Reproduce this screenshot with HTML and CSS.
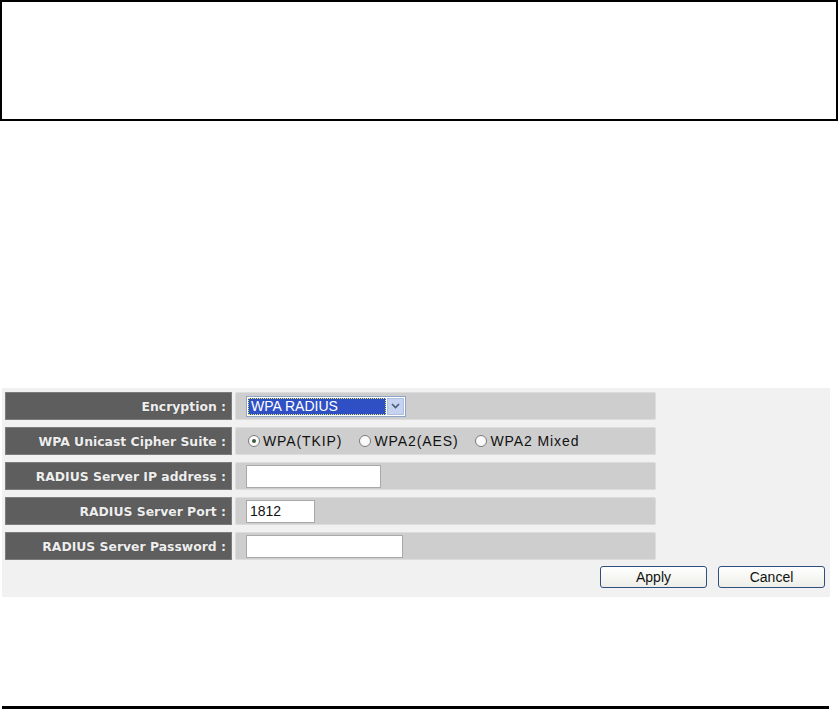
FILE: index.html
```html
<!DOCTYPE html>
<html>
<head>
<meta charset="utf-8">
<link rel="stylesheet" href="styles.css">
</head>
<body>
<div class="topbox"></div>
<div class="panel">
  <div class="grid">
    <div class="label">Encryption :</div>
    <div class="value">
      <div class="select">
        <span class="sel-text">WPA RADIUS</span>
        <span class="sel-btn"><svg width="9" height="6" viewBox="0 0 9 6"><path d="M1 1 L4.5 4.5 L8 1" fill="none" stroke="#4a5a7a" stroke-width="1.6"/></svg></span>
      </div>
    </div>
    <div class="label">WPA Unicast Cipher Suite :</div>
    <div class="value radios">
      <span class="radio-item"><span class="radio on"></span>WPA(TKIP)</span>
      <span class="radio-item"><span class="radio"></span>WPA2(AES)</span>
      <span class="radio-item"><span class="radio"></span>WPA2 Mixed</span>
    </div>
    <div class="label">RADIUS Server IP address :</div>
    <div class="value"><div class="input w135"></div></div>
    <div class="label">RADIUS Server Port :</div>
    <div class="value"><div class="input w69">1812</div></div>
    <div class="label">RADIUS Server Password :</div>
    <div class="value"><div class="input w157"></div></div>
  </div>
  <div class="buttons">
    <div class="btn">Apply</div>
    <div class="btn">Cancel</div>
  </div>
</div>
<div class="bottomline"></div>
</body>
</html>
```
FILE: styles.css
```css
html, body {
  margin: 0;
  padding: 0;
  background: #ffffff;
}
body {
  width: 840px;
  height: 710px;
  overflow: hidden;
  font-family: "Liberation Sans", Arial, sans-serif;
}
.topbox {
  width: 834px;
  height: 117px;
  border: 2px solid #000;
}
.panel {
  margin: 267px 0 0 2px;
  width: 828px;
  height: 209px;
  box-sizing: border-box;
  padding: 4px 0 0 3px;
  background: #f1f1f1;
}
.grid {
  display: grid;
  grid-template-columns: 227px 421px;
  grid-auto-rows: 28px;
  column-gap: 3px;
  row-gap: 7px;
}
.label {
  box-sizing: border-box;
  background: #5e5e5e;
  border: 1px solid #7c7c7c;
  color: #eeeeee;
  font-family: "DejaVu Sans", Verdana, sans-serif;
  font-weight: bold;
  font-size: 12.4px;
  padding-right: 5px;
  display: flex;
  align-items: center;
  justify-content: flex-end;
  text-shadow: 0 0 1px #444;
}
.value {
  box-sizing: border-box;
  background: #cecece;
  border: 1px solid #dcdcdc;
  border-radius: 2px;
  display: flex;
  align-items: center;
  padding-left: 10px;
  font-size: 14px;
  color: #111;
}
.select {
  width: 160px;
  height: 21px;
  box-sizing: border-box;
  border: 1px solid #8fa4c8;
  background: #fff;
  display: flex;
  align-items: stretch;
  padding: 1px;
}
.sel-text {
  flex: 1;
  background: #2f4fc4;
  color: #fff;
  outline: 1px dotted #e8e860;
  outline-offset: -1px;
  font-size: 14px;
  padding-left: 3px;
  line-height: 17px;
}
.sel-btn {
  width: 17px;
  margin-left: 1px;
  background: #c5d3f0;
  border: 1px solid #b0c0e0;
  box-sizing: border-box;
  display: flex;
  align-items: center;
  justify-content: center;
}
.radios {
  padding-left: 12px;
}
.radio-item {
  display: inline-flex;
  align-items: center;
  margin-right: 17px;
  letter-spacing: 0.9px;
}
.radio {
  width: 12px;
  height: 12px;
  box-sizing: border-box;
  border: 1px solid #7a7a7a;
  border-radius: 50%;
  background: #fafafa;
  margin-right: 3px;
  position: relative;
}
.radio.on::after {
  content: "";
  position: absolute;
  left: 3px;
  top: 3px;
  width: 4px;
  height: 4px;
  border-radius: 50%;
  background: #3a5a3a;
}
.input {
  height: 23px;
  box-sizing: border-box;
  border: 1px solid #a9a9a9;
  background: #fff;
  font-size: 14px;
  line-height: 21px;
  padding-left: 3px;
}
.w135 { width: 135px; }
.w69 { width: 69px; }
.w157 { width: 157px; }
.buttons {
  display: flex;
  justify-content: flex-end;
  gap: 11px;
  margin-top: 6px;
  padding-right: 5px;
}
.btn {
  width: 107px;
  height: 22px;
  box-sizing: border-box;
  border: 1px solid #2e4f80;
  border-radius: 3px;
  background: linear-gradient(#ffffff, #eeeee8);
  font-size: 14px;
  color: #111;
  text-align: center;
  line-height: 20px;
}
.bottomline {
  margin: 109px 0 0 2px;
  width: 827px;
  height: 3px;
  background: #000;
}
```
